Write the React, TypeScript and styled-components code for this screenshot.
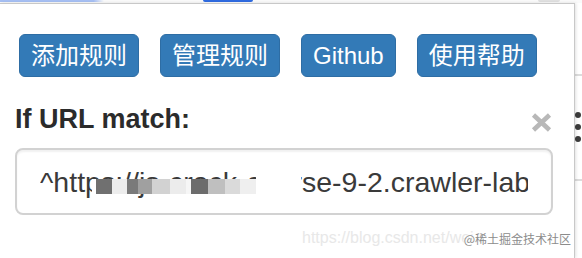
import React from "react";
import styled, { createGlobalStyle } from "styled-components";

const GlobalStyle = createGlobalStyle`
  html, body {
    margin: 0;
    padding: 0;
    background: #ffffff;
  }
`;

const Frame = styled.div`
  position: relative;
  width: 582px;
  height: 258px;
  overflow: hidden;
  display: flex;
  flex-direction: column;
  background: #ffffff;
  font-family: "Liberation Sans", "Noto Sans CJK SC", Arial, sans-serif;
`;

const TopStrip = styled.div`
  display: flex;
  align-items: flex-start;
  height: 3px;
  background: #fafafa;
  flex-shrink: 0;
`;

const TabHint = styled.div`
  width: 104px;
  height: 2px;
  background: linear-gradient(to right, #a6bff3 90%, rgba(166, 191, 243, 0));
`;

const PillHint = styled.div`
  margin-left: 99px;
  width: 50px;
  height: 2px;
  background: #2f6be0;
  border-radius: 0 0 4px 4px;
`;

const CircleHint = styled.div`
  margin-left: 285px;
  width: 22px;
  height: 2px;
  background: #e0e0e0;
  border-radius: 0 0 11px 11px;
`;

const Body = styled.div`
  flex: 1;
  display: flex;
  min-height: 0;
`;

const Popup = styled.div`
  position: relative;
  z-index: 1;
  flex-shrink: 0;
  width: 575px;
  box-sizing: border-box;
  padding: 30px 21px 0 15px;
  background: #ffffff;
  border-top: 1px solid #c8c8c8;
  border-right: 1px solid #c8c8c8;
  box-shadow: 1px 0 3px rgba(0, 0, 0, 0.12);
`;

const Gutter = styled.div`
  flex: 1;
  display: flex;
  flex-direction: column;
  background: #ffffff;
`;

const GutterRule = styled.div<{ $top: number }>`
  margin-top: ${(p) => p.$top}px;
  height: 2px;
  background: #dcdcdc;
`;

const Ellipsis = styled.div`
  display: flex;
  flex-direction: column;
  gap: 6px;
  margin-top: 36px;
`;

const Dot = styled.span`
  width: 6px;
  height: 6px;
  border-radius: 50%;
  background: #3c3c3c;
`;

const ButtonRow = styled.div`
  display: flex;
  gap: 21px;
  margin-left: 4px;
`;

const ActionButton = styled.button`
  display: inline-flex;
  align-items: center;
  justify-content: center;
  height: 43px;
  padding: 0 11px;
  border: 1px solid #2e6da4;
  border-radius: 6px;
  background: #337ab7;
  color: #ffffff;
  font-family: "Liberation Sans", "Noto Sans CJK SC", Arial, sans-serif;
  font-size: 24px;
  line-height: 1;
  cursor: pointer;
`;

const FieldHeader = styled.div`
  display: flex;
  justify-content: space-between;
  align-items: flex-start;
  height: 38px;
  margin-top: 23px;
  margin-bottom: 10px;
`;

const FieldLabel = styled.label`
  font-size: 27px;
  font-weight: 700;
  line-height: 38px;
  color: #2b2b2b;
`;

const CloseButton = styled.button`
  margin: 13px 1px 0 0;
  padding: 0;
  border: 0;
  background: none;
  line-height: 0;
  cursor: pointer;
`;

const InputBox = styled.div`
  display: flex;
  align-items: center;
  height: 67px;
  box-sizing: border-box;
  padding: 0 23px;
  border: 2px solid #d2d2d2;
  border-radius: 8px;
  box-shadow: inset 0 2px 2px rgba(0, 0, 0, 0.06);
`;

const InputText = styled.div`
  position: relative;
  flex: 1;
  overflow: hidden;
  white-space: nowrap;
  font-size: 28.5px;
  line-height: 34px;
  color: #3a3a3a;
`;

const Mosaic = styled.span`
  position: absolute;
  left: 52px;
  top: 14px;
  display: flex;
`;

const MosaicCell = styled.span<{ $w: number; $c: string }>`
  width: ${(p) => p.$w}px;
  height: 15px;
  background: ${(p) => p.$c};
`;

const Blank = styled.span`
  position: absolute;
  left: 216px;
  top: 0;
  bottom: 0;
  width: 45px;
  background: #ffffff;
`;

const NextLabel = styled(FieldLabel)`
  display: block;
  margin-top: 34px;
`;

const Watermark = styled.div`
  position: absolute;
  z-index: 2;
  left: 302px;
  top: 228px;
  display: flex;
  align-items: center;
  pointer-events: none;
`;

const CsdnText = styled.span`
  font-size: 16px;
  line-height: 18px;
  color: #e8e8e8;
`;

const JuejinText = styled.span`
  margin-left: -10px;
  margin-top: 3px;
  font-family: "Noto Sans CJK SC", "Liberation Sans", sans-serif;
  font-size: 12px;
  line-height: 16px;
  color: #8c8c8c;
  text-shadow: 0 0 2px #ffffff, 0 0 2px #ffffff, 0 0 3px #ffffff;
`;

const mosaicCells: [number, string][] = [
  [4, "#ffffff"],
  [16, "#707070"],
  [15, "#ededed"],
  [11, "#7a7a7a"],
  [14, "#a0a0a0"],
  [18, "#d2d2d2"],
  [16, "#ececec"],
  [5, "#f6f6f6"],
  [17, "#6c6c6c"],
  [17, "#bfbfbf"],
  [15, "#dadada"],
  [16, "#efefef"],
];

const buttons = ["添加规则", "管理规则", "Github", "使用帮助"];

const App: React.FC = () => {
  return (
    <Frame>
      <GlobalStyle />
      <TopStrip>
        <TabHint />
        <PillHint />
        <CircleHint />
      </TopStrip>
      <Body>
        <Popup>
          <ButtonRow>
            {buttons.map((b) => (
              <ActionButton key={b}>{b}</ActionButton>
            ))}
          </ButtonRow>
          <FieldHeader>
            <FieldLabel>If URL match:</FieldLabel>
            <CloseButton aria-label="close">
              <svg width="21" height="19" viewBox="0 0 21 19">
                <path d="M2.5 2 L18.5 17 M18.5 2 L2.5 17" stroke="#b8b8b8" strokeWidth="4.6" />
              </svg>
            </CloseButton>
          </FieldHeader>
          <InputBox>
            <InputText>
              ^https://js-crack-course-9-2.crawler-lab.cn/*
              <Mosaic>
                {mosaicCells.map(([w, c], i) => (
                  <MosaicCell key={i} $w={w} $c={c} />
                ))}
              </Mosaic>
              <Blank />
            </InputText>
          </InputBox>
          <NextLabel>Response:</NextLabel>
        </Popup>
        <Gutter>
          <GutterRule $top={71} />
          <Ellipsis>
            <Dot />
            <Dot />
            <Dot />
          </Ellipsis>
          <GutterRule $top={37} />
        </Gutter>
      </Body>
      <Watermark>
        <CsdnText>https://blog.csdn.net/wei</CsdnText>
        <JuejinText>@稀土掘金技术社区</JuejinText>
      </Watermark>
    </Frame>
  );
};

export default App;
